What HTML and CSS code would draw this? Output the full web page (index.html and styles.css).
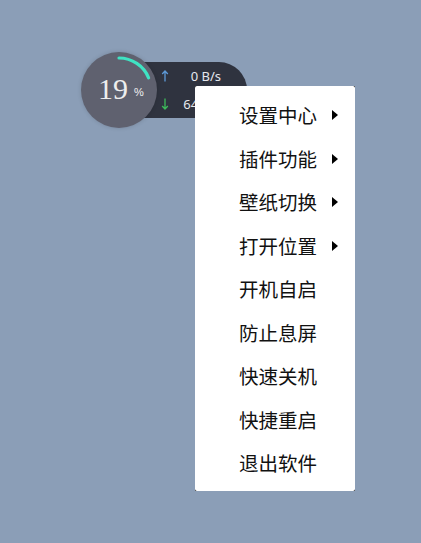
FILE: index.html
```html
<!DOCTYPE html>
<html lang="zh-CN">
<head>
    <meta charset="UTF-8">
    <meta name="viewport" content="width=device-width, initial-scale=1.0">
    <title>悬浮窗</title>
    <link rel="stylesheet" href="styles.css">
</head>
<body>
    <div class="desktop">
        <div class="widget">
            <div class="ring">
                <svg class="ring-arc" width="76" height="76" viewBox="0 0 76 76">
                    <path d="M38 6 A32 32 0 0 1 67.6 25.8" fill="none" stroke="#3fe3c3" stroke-width="3.2" stroke-linecap="round"/>
                </svg>
                <span class="ring-value">19</span>
                <span class="ring-unit">%</span>
            </div>
            <div class="speed">
                <div class="speed-row">
                    <svg class="arrow" width="8" height="12" viewBox="0 0 8 12">
                        <path d="M4 11.5 V1 M1.2 4 L4 1 L6.8 4" fill="none" stroke="#5d9ad8" stroke-width="1.3"/>
                    </svg>
                    <span class="speed-text">0 B/s</span>
                </div>
                <div class="speed-row">
                    <svg class="arrow" width="8" height="12" viewBox="0 0 8 12">
                        <path d="M4 0.5 V11 M1.2 8 L4 11 L6.8 8" fill="none" stroke="#3dbb5a" stroke-width="1.3"/>
                    </svg>
                    <span class="speed-text">64 B/s</span>
                </div>
            </div>
        </div>

        <div class="menu">
            <div class="menu-inner">
                <div class="menu-item">设置中心<span class="submenu"></span></div>
                <div class="menu-item">插件功能<span class="submenu"></span></div>
                <div class="menu-item">壁纸切换<span class="submenu"></span></div>
                <div class="menu-item">打开位置<span class="submenu"></span></div>
                <div class="menu-item">开机自启</div>
                <div class="menu-item">防止息屏</div>
                <div class="menu-item">快速关机</div>
                <div class="menu-item">快捷重启</div>
                <div class="menu-item">退出软件</div>
            </div>
        </div>
    </div>
</body>
</html>
```

FILE: styles.css
```css
body {
    margin: 0;
    background-color: #8b9eb7;
    font-family: "Noto Sans CJK SC", "Noto Sans", sans-serif;
}
.desktop {
    position: relative;
    width: 421px;
    height: 543px;
    padding: 52px 0 0 81px;
    box-sizing: border-box;
}
.widget {
    display: flex;
    align-items: center;
}
.ring {
    position: relative;
    z-index: 1;
    width: 76px;
    height: 76px;
    border-radius: 50%;
    background-color: #5f616f;
    box-shadow: 0 0 4px rgba(0, 0, 0, 0.15);
}
.ring-arc {
    position: absolute;
    left: 0;
    top: 0;
}
.ring-value {
    position: absolute;
    left: 17px;
    top: 20px;
    font-family: "Liberation Serif", "DejaVu Serif", serif;
    font-size: 30px;
    line-height: 34px;
    color: #eeeeee;
}
.ring-unit {
    position: absolute;
    left: 53px;
    top: 34px;
    font-family: "Liberation Sans", sans-serif;
    font-size: 11px;
    line-height: 12px;
    color: #f2f2f2;
}
.speed {
    width: 107px;
    height: 56px;
    margin-left: -17px;
    padding: 0 26px 0 21px;
    box-sizing: border-box;
    background-color: #2f333f;
    border-radius: 0 28px 28px 0;
    display: flex;
    flex-direction: column;
    justify-content: center;
    gap: 6px;
}
.speed-row {
    display: flex;
    align-items: center;
    justify-content: space-between;
    height: 22px;
}
.arrow {
    display: block;
}
.speed-text {
    font-family: "Noto Sans", sans-serif;
    font-size: 13px;
    color: #e6e8ee;
}
.menu {
    position: absolute;
    left: 195px;
    top: 86px;
    width: 160px;
    height: 405px;
    background-color: #111111;
}
.menu-inner {
    height: 100%;
    background-color: #ffffff;
    border-radius: 2px;
    padding-top: 7px;
    box-sizing: border-box;
}
.menu-item {
    position: relative;
    height: 43.5px;
    line-height: 43.5px;
    padding-left: 44px;
    font-size: 19.5px;
    color: #111111;
}
.submenu {
    position: absolute;
    left: 137px;
    top: 17px;
    width: 0;
    height: 0;
    border-top: 5px solid transparent;
    border-bottom: 5px solid transparent;
    border-left: 6px solid #000000;
}
```
